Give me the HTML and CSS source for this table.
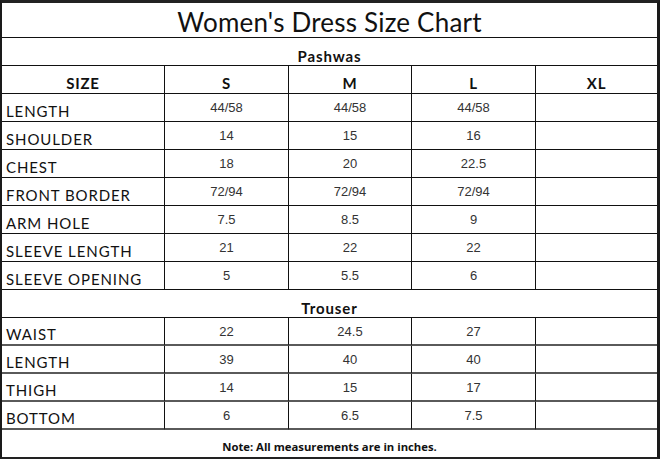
FILE: index.html
```html
<!DOCTYPE html>
<html>
<head>
<meta charset="utf-8">
<link rel="stylesheet" href="styles.css">
</head>
<body>
<div class="chart">
<table class="grid">
  <colgroup>
    <col class="c0"><col class="c1"><col class="c2"><col class="c3"><col class="c4">
  </colgroup>
  <tr class="r-title"><td colspan="5" class="title">Women's Dress Size Chart</td></tr>
  <tr class="r-sec"><td colspan="5" class="sec">Pashwas</td></tr>
  <tr class="r-head"><td class="head">SIZE</td><td class="head">S</td><td class="head">M</td><td class="head">L</td><td class="head">XL</td></tr>
  <tr class="r"><td class="lab">LENGTH</td><td class="val">44/58</td><td class="val">44/58</td><td class="val">44/58</td><td class="val"></td></tr>
  <tr class="r"><td class="lab">SHOULDER</td><td class="val">14</td><td class="val">15</td><td class="val">16</td><td class="val"></td></tr>
  <tr class="r"><td class="lab">CHEST</td><td class="val">18</td><td class="val">20</td><td class="val">22.5</td><td class="val"></td></tr>
  <tr class="r"><td class="lab">FRONT BORDER</td><td class="val">72/94</td><td class="val">72/94</td><td class="val">72/94</td><td class="val"></td></tr>
  <tr class="r"><td class="lab">ARM HOLE</td><td class="val">7.5</td><td class="val">8.5</td><td class="val">9</td><td class="val"></td></tr>
  <tr class="r"><td class="lab">SLEEVE LENGTH</td><td class="val">21</td><td class="val">22</td><td class="val">22</td><td class="val"></td></tr>
  <tr class="r"><td class="lab">SLEEVE OPENING</td><td class="val">5</td><td class="val">5.5</td><td class="val">6</td><td class="val"></td></tr>
  <tr class="r-sec"><td colspan="5" class="sec">Trouser</td></tr>
  <tr class="r t"><td class="lab">WAIST</td><td class="val">22</td><td class="val">24.5</td><td class="val">27</td><td class="val"></td></tr>
  <tr class="r t"><td class="lab">LENGTH</td><td class="val">39</td><td class="val">40</td><td class="val">40</td><td class="val"></td></tr>
  <tr class="r t"><td class="lab">THIGH</td><td class="val">14</td><td class="val">15</td><td class="val">17</td><td class="val"></td></tr>
  <tr class="r t"><td class="lab">BOTTOM</td><td class="val">6</td><td class="val">6.5</td><td class="val">7.5</td><td class="val"></td></tr>
  <tr class="r-note"><td colspan="5" class="note">Note: All measurements are in inches.</td></tr>
</table>
</div>
</body>
</html>
```
FILE: styles.css
```css
html, body {
  margin: 0;
  padding: 0;
  background: #fff;
}
.chart {
  width: 660px;
  height: 459px;
  box-sizing: border-box;
  border-top: 3px solid #222;
  border-left: 2px solid #1a1a1a;
  border-right: 3px solid #1a1a1a;
  border-bottom: 2px solid #222;
  overflow: hidden;
}
.grid {
  width: 655px;
  border-collapse: separate;
  border-spacing: 0;
  table-layout: fixed;
}
.c0 { width: 163px; }
.c1 { width: 124px; }
.c2 { width: 123px; }
.c3 { width: 124px; }
.c4 { width: 121px; }
.grid td {
  padding: 0;
  border-right: 1px solid #111;
  border-bottom: 1px solid #111;
  color: #111;
  line-height: 16px;
}
.grid td:last-child { border-right: none; }
.r-title { height: 35px; }
.r-sec, .r-head, .r { height: 28px; }
.r.t td { border-bottom: 2px solid #5a5a5a; }
.r-note { height: 26px; }
.r-note td { border-bottom: none; }
.title {
  text-align: center;
  font-family: Lato, "Liberation Sans", sans-serif;
  font-size: 26px;
  line-height: 28px !important;
  letter-spacing: 0.2px;
  padding-top: 3px !important;
  color: #111;
}
.sec {
  text-align: center;
  font-family: Lato, "Open Sans", sans-serif;
  font-weight: 700;
  font-size: 15px;
  letter-spacing: 0.9px;
  padding-top: 8px !important;
}
.head {
  text-align: center;
  font-family: Lato, sans-serif;
  font-weight: 700;
  font-size: 15px;
  letter-spacing: 0.8px;
  padding-top: 6px !important;
}
.lab {
  font-family: Lato, sans-serif;
  font-size: 15px;
  letter-spacing: 0.9px;
  padding-left: 4px !important;
  padding-top: 6px !important;
}
.val {
  text-align: center;
  font-family: "Liberation Sans", Arial, sans-serif;
  font-size: 13px;
  color: #333 !important;
  padding-top: 1px !important;
}
.note {
  text-align: center;
  font-family: "Open Sans", Lato, sans-serif;
  font-weight: 700;
  font-size: 11.3px;
  padding-top: 8px !important;
}
```
